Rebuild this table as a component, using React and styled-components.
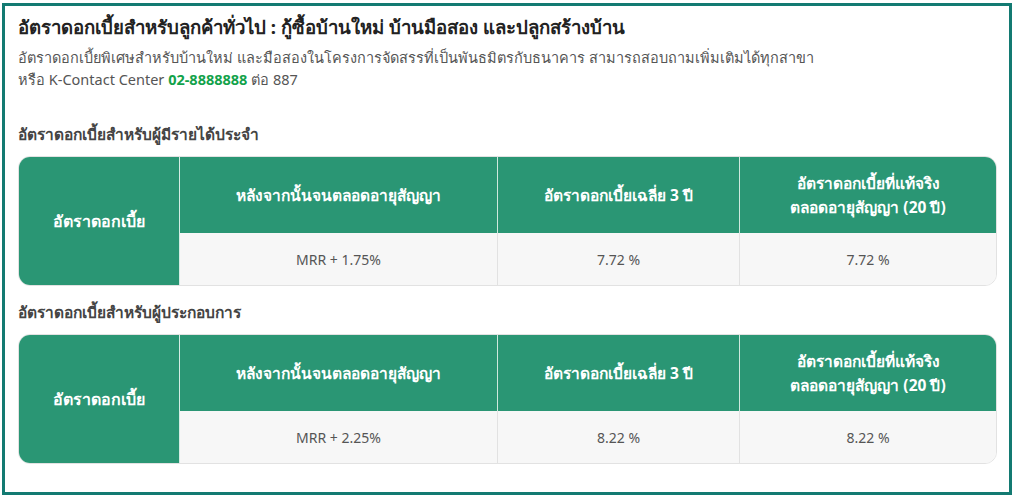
import React from "react";
import styled, { createGlobalStyle } from "styled-components";

const GlobalStyle = createGlobalStyle`
  html, body {
    margin: 0;
    padding: 0;
    background: #fff;
  }
  body {
    font-family: "Noto Sans", "Open Sans", "DejaVu Sans", sans-serif;
    color: #444;
  }
`;

const rateTables = [
  {
    title: "อัตราดอกเบี้ยสำหรับผู้มีรายได้ประจำ",
    mrr: "MRR + 1.75%",
    avg: "7.72 %",
    effective: "7.72 %",
  },
  {
    title: "อัตราดอกเบี้ยสำหรับผู้ประกอบการ",
    mrr: "MRR + 2.25%",
    avg: "8.22 %",
    effective: "8.22 %",
  },
];

const App = () => {
  return (
    <>
      <GlobalStyle />
      <Frame>
        <Heading>
          อัตราดอกเบี้ยสำหรับลูกค้าทั่วไป : กู้ซื้อบ้านใหม่ บ้านมือสอง และปลูกสร้างบ้าน
        </Heading>
        <Intro>
          อัตราดอกเบี้ยพิเศษสำหรับบ้านใหม่ และมือสองในโครงการจัดสรรที่เป็นพันธมิตรกับธนาคาร
          สามารถสอบถามเพิ่มเติมได้ทุกสาขา
          <br />
          หรือ K-Contact Center <Phone>02-8888888</Phone> ต่อ 887
        </Intro>
        {rateTables.map((t, i) => (
          <Section key={i} first={i === 0}>
            <SubTitle>{t.title}</SubTitle>
            <RateGrid>
              <RowHead>อัตราดอกเบี้ย</RowHead>
              <HeadCell>หลังจากนั้นจนตลอดอายุสัญญา</HeadCell>
              <HeadCell>อัตราดอกเบี้ยเฉลี่ย 3 ปี</HeadCell>
              <HeadCell last>
                อัตราดอกเบี้ยที่แท้จริง
                <br />
                ตลอดอายุสัญญา (20 ปี)
              </HeadCell>
              <DataCell>{t.mrr}</DataCell>
              <DataCell>{t.avg}</DataCell>
              <DataCell last>{t.effective}</DataCell>
            </RateGrid>
          </Section>
        ))}
      </Frame>
    </>
  );
};

export default App;

const Frame = styled.div`
  box-sizing: border-box;
  width: 1010px;
  height: 492px;
  margin: 3px 0 0 2px;
  border: 3px solid #137a72;
  padding: 9px 12px 0 13px;
`;

const Heading = styled.h1`
  margin: 0;
  font-size: 18.6px;
  line-height: 24px;
  font-weight: 700;
  color: #222;
`;

const Intro = styled.p`
  margin: 7px 0 0;
  font-size: 14.5px;
  line-height: 22px;
  color: #555;
`;

const Phone = styled.span`
  color: #12a24a;
  font-weight: 700;
`;

const Section = styled.section`
  margin-top: ${(p) => (p.first ? "33px" : "15px")};
`;

const SubTitle = styled.h2`
  margin: 0 0 11px;
  font-size: 15.5px;
  line-height: 22px;
  font-weight: 700;
  color: #444;
`;

const RateGrid = styled.div`
  display: grid;
  grid-template-columns: 161px 318px 242px 1fr;
  grid-template-rows: 76px 52px;
  width: 979px;
  border-radius: 12px;
  overflow: hidden;
  border: 1px solid #e2e2e2;
  box-sizing: border-box;
`;

const RowHead = styled.div`
  grid-row: 1 / span 2;
  display: flex;
  align-items: center;
  justify-content: center;
  background: #2a9674;
  color: #fff;
  font-weight: 700;
  font-size: 16px;
  border-right: 1px solid #d5ece4;
`;

const HeadCell = styled.div`
  display: flex;
  align-items: center;
  justify-content: center;
  text-align: center;
  background: #2a9674;
  color: #fff;
  font-weight: 700;
  font-size: 15.5px;
  line-height: 24px;
  border-right: ${(p) => (p.last ? "none" : "1px solid #cfe8de")};
`;

const DataCell = styled.div`
  display: flex;
  align-items: center;
  justify-content: center;
  background: #f7f7f7;
  color: #555;
  font-size: 14px;
  border-right: ${(p) => (p.last ? "none" : "1px solid #e2e2e2")};
`;
